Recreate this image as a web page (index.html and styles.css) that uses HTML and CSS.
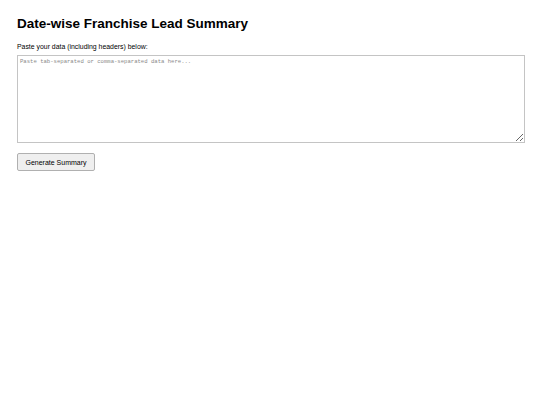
FILE: index.html
```html
<!DOCTYPE html>
<html lang="en">
<head>
    <meta charset="UTF-8">
    <meta name="viewport" content="width=device-width, initial-scale=1.0">
    <title>Date-wise Franchise Lead Summary</title>
    <link rel="stylesheet" href="styles.css">
</head>
<body>
    <h1 class="title">Date-wise Franchise Lead Summary</h1>

    <label class="label" for="dataInput">Paste your data (including headers) below:</label>
    <textarea id="dataInput" class="data-input" placeholder="Paste tab-separated or comma-separated data here..."></textarea>

    <button class="btn" type="button">Generate Summary</button>
</body>
</html>
```

FILE: styles.css
```css
body {
    font-family: "Liberation Sans", Arial, sans-serif;
    margin: 0;
    padding: 15px 15px 15px 17px;
    background: #fff;
    color: #000;
}

/* Page heading */
.title {
    font-size: 13.5px;
    font-weight: bold;
    margin: 0 0 9px;
    line-height: 18px;
}

.label {
    display: block;
    font-size: 6.9px;
    line-height: 9px;
    margin-bottom: 4px;
}

.data-input {
    display: block;
    box-sizing: border-box;
    width: 100%;
    height: 88px;
    padding: 2px;
    border: 1px solid #c4c4c4;
    font-family: "Liberation Mono", monospace;
    font-size: 5.6px;
    resize: vertical;
}

.data-input::placeholder {
    color: #8a8a8a;
}

/* Submit button */
.btn {
    display: block;
    margin-top: 10px;
    width: 78px;
    height: 18px;
    font-family: "Liberation Sans", Arial, sans-serif;
    font-size: 7px;
    background: #efefef;
    border: 1px solid #b0b0b0;
    border-radius: 2px;
    color: #000;
}
```
